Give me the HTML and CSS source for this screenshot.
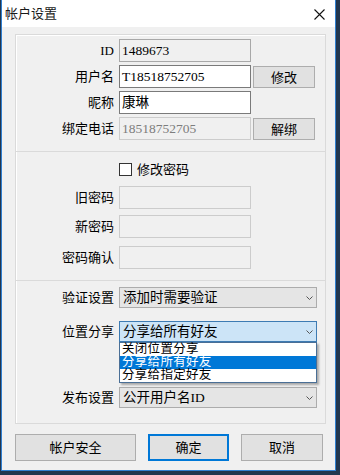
FILE: index.html
```html
<!DOCTYPE html>
<html lang="zh-CN">
<head>
    <meta charset="UTF-8">
    <meta name="viewport" content="width=device-width, initial-scale=1.0">
    <title>帐户设置</title>
    <link rel="stylesheet" href="styles.css">
</head>
<body>

    <div class="window">

        <!-- Title Bar -->
        <div class="titlebar">
            <span class="title">帐户设置</span>
            <svg class="close" width="11" height="11" viewBox="0 0 11 11">
                <path d="M0.5 0.5 L10.5 10.5 M10.5 0.5 L0.5 10.5" stroke="#111" stroke-width="1.1" fill="none"/>
            </svg>
        </div>

        <div class="client">
            <div class="frame">

                <!-- Account Info -->
                <div class="group group-account">
                    <div class="row">
                        <span class="label">ID</span>
                        <div class="field readonly">1489673</div>
                    </div>
                    <div class="row">
                        <span class="label">用户名</span>
                        <div class="field">T18518752705</div>
                        <button class="btn btn-small">修改</button>
                    </div>
                    <div class="row">
                        <span class="label">昵称</span>
                        <div class="field">康琳</div>
                    </div>
                    <div class="row">
                        <span class="label">绑定电话</span>
                        <div class="field disabled">18518752705</div>
                        <button class="btn btn-small">解绑</button>
                    </div>
                </div>

                <!-- Password -->
                <div class="group group-password">
                    <div class="check-row">
                        <span class="checkbox"></span>
                        <span class="check-label">修改密码</span>
                    </div>
                    <div class="row row-old">
                        <span class="label">旧密码</span>
                        <div class="field disabled"></div>
                    </div>
                    <div class="row row-new">
                        <span class="label">新密码</span>
                        <div class="field disabled"></div>
                    </div>
                    <div class="row row-confirm">
                        <span class="label">密码确认</span>
                        <div class="field disabled"></div>
                    </div>
                </div>

                <!-- Privacy -->
                <div class="group group-privacy">
                    <div class="row combo-row">
                        <span class="label">验证设置</span>
                        <div class="combo">
                            <span>添加时需要验证</span>
                            <svg class="arrow" width="7" height="4" viewBox="0 0 7 4"><path d="M0.5 0.5 L3.5 3.5 L6.5 0.5" stroke="#555" fill="none"/></svg>
                        </div>
                    </div>
                    <div class="row combo-row row-location">
                        <span class="label">位置分享</span>
                        <div class="combo focused">
                            <span>分享给所有好友</span>
                            <svg class="arrow" width="7" height="4" viewBox="0 0 7 4"><path d="M0.5 0.5 L3.5 3.5 L6.5 0.5" stroke="#555" fill="none"/></svg>
                            <ul class="dropdown">
                                <li>关闭位置分享</li>
                                <li class="selected">分享给所有好友</li>
                                <li>分享给指定好友</li>
                            </ul>
                        </div>
                    </div>
                    <div class="row combo-row row-publish">
                        <span class="label">发布设置</span>
                        <div class="combo">
                            <span>公开用户名ID</span>
                            <svg class="arrow" width="7" height="4" viewBox="0 0 7 4"><path d="M0.5 0.5 L3.5 3.5 L6.5 0.5" stroke="#555" fill="none"/></svg>
                        </div>
                    </div>
                </div>

            </div>

            <!-- Dialog Buttons -->
            <div class="actions">
                <button class="btn btn-security">帐户安全</button>
                <button class="btn btn-ok">确定</button>
                <button class="btn btn-cancel">取消</button>
            </div>
        </div>

    </div>

</body>
</html>
```

FILE: styles.css
```css
/* General Page Styling */
* {
    box-sizing: border-box;
}

body {
    margin: 0;
    background-color: #22364e;
    font-family: "Liberation Serif", "Noto Sans CJK SC", serif;
    font-size: 13px;
    color: #000;
}

/* Dialog Window */
.window {
    width: 335px;
    height: 471px;
    margin-left: 1px;
    background: #f0f0f0;
    border: 1px solid #2f7fd0;
    border-top: none;
}

.titlebar {
    height: 27px;
    background: #fff;
    display: flex;
    align-items: center;
    justify-content: space-between;
    padding: 0 10px 0 3px;
}

.title {
    color: #1a1a1a;
    line-height: 27px;
}

.close {
    display: block;
    margin-top: 1px;
}

.client {
    padding: 7px 0 0 13px;
}

/* Group Frame */
.frame {
    width: 311px;
    border: 1px solid #dadada;
    box-shadow: inset 1px 1px 0 #fff;
}

.group + .group {
    border-top: 1px solid #dadada;
}

.group-account {
    padding: 4px 0 11px;
}

.group-password {
    padding: 11px 0 11px;
}

.group-privacy {
    padding: 6px 0 15px;
}

/* Rows */
.row {
    display: flex;
    align-items: center;
    height: 23px;
}

.group-account .row + .row {
    margin-top: 3px;
}

.label {
    width: 98px;
    margin-right: 5px;
    text-align: right;
    line-height: 23px;
}

.field {
    width: 132px;
    height: 23px;
    border: 1px solid #7a7a7a;
    background: #fff;
    padding-left: 2px;
    line-height: 21px;
    font-size: 13.5px;
    white-space: nowrap;
}

.field.readonly {
    background: #f0f0f0;
    border-color: #a8a8a8;
}

.field.disabled {
    background: #f0f0f0;
    border-color: #cccccc;
    color: #7d7d7d;
}

/* Checkbox */
.check-row {
    display: flex;
    align-items: center;
    height: 13px;
    margin-left: 103px;
}

.checkbox {
    width: 13px;
    height: 13px;
    border: 1px solid #333;
    background: #fff;
}

.check-label {
    margin-left: 5px;
    line-height: 13px;
}

.row-old {
    margin-top: 10px;
}

.row-new {
    margin-top: 6px;
}

.row-confirm {
    margin-top: 8px;
}

/* Combo Boxes */
.combo-row {
    height: 21px;
}

.row-location {
    margin-top: 13px;
}

.row-publish {
    margin-top: 45px;
}

.combo {
    position: relative;
    width: 198px;
    height: 21px;
    border: 1px solid #acacac;
    background: #e5e5e5;
    padding: 0 3px 0 3px;
    display: flex;
    align-items: center;
    justify-content: space-between;
    line-height: 19px;
    font-size: 13.5px;
}

.combo.focused {
    background: #cce4f7;
    border-color: #3d7bb3;
}

.arrow {
    display: block;
}

.dropdown {
    position: absolute;
    top: 20px;
    left: -1px;
    width: 198px;
    margin: 0;
    padding: 0;
    list-style: none;
    background: #fff;
    border: 1px solid #4a6f96;
    box-shadow: 2px 2px 2px rgba(0, 0, 0, 0.3);
    z-index: 2;
}

.dropdown li {
    height: 13px;
    line-height: 13px;
    padding-left: 2px;
    font-size: 12.5px;
    letter-spacing: 0.3px;
    white-space: nowrap;
}

.dropdown li.selected {
    background: #0078d7;
    color: #fff;
}

/* Buttons */
.btn {
    font-family: "Liberation Serif", "Noto Sans CJK SC", serif;
    font-size: 13px;
    background: #e1e1e1;
    border: 1px solid #adadad;
    color: #000;
    padding: 0;
    line-height: 1;
}

.btn-small {
    width: 62px;
    height: 22px;
    margin-left: 2px;
    align-self: flex-end;
}

.actions {
    display: flex;
    gap: 12px;
    margin-top: 10px;
}

.actions .btn {
    height: 27px;
}

.btn-security {
    width: 121px;
}

.btn-ok {
    width: 81px;
    border-color: #0078d7;
    box-shadow: inset 0 0 0 1px #0078d7;
}

.btn-cancel {
    width: 82px;
}
```
